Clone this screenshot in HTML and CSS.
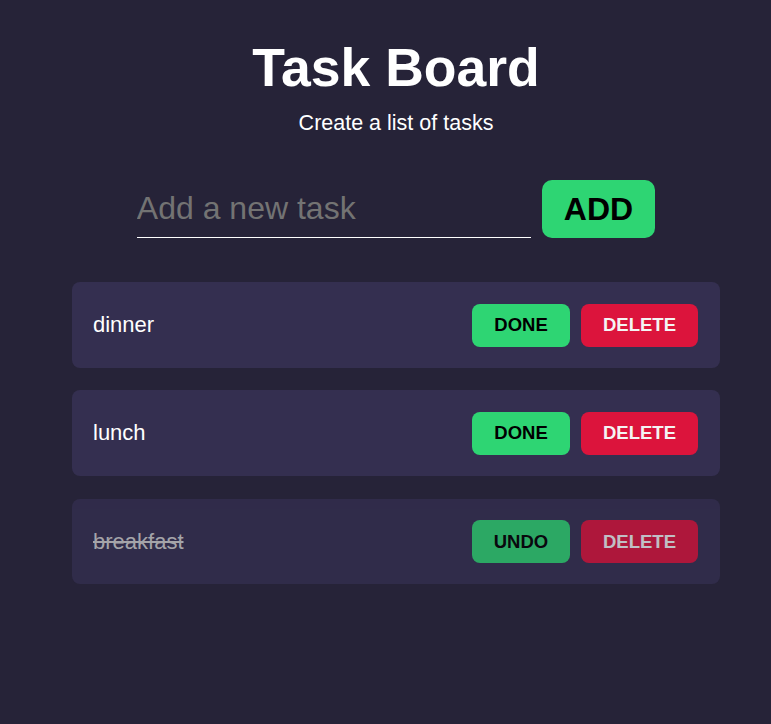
FILE: index.html
```html
<!DOCTYPE html>
<html lang="en">
<head>
<meta charset="utf-8">
<title>Task Board</title>
<link rel="stylesheet" href="styles.css">
</head>
<body>
<main class="app">
  <header class="header">
    <h1 class="title">Task Board</h1>
    <p class="subtitle">Create a list of tasks</p>
  </header>
  <form class="add-form" onsubmit="return false">
    <input class="add-input" type="text" placeholder="Add a new task">
    <button class="add-btn" type="submit">ADD</button>
  </form>
  <ul class="tasks">
    <li class="task">
      <span class="task-name">dinner</span>
      <div class="task-actions">
        <button class="btn btn-done">DONE</button>
        <button class="btn btn-delete">DELETE</button>
      </div>
    </li>
    <li class="task">
      <span class="task-name">lunch</span>
      <div class="task-actions">
        <button class="btn btn-done">DONE</button>
        <button class="btn btn-delete">DELETE</button>
      </div>
    </li>
    <li class="task task-completed">
      <span class="task-name">breakfast</span>
      <div class="task-actions">
        <button class="btn btn-done">UNDO</button>
        <button class="btn btn-delete">DELETE</button>
      </div>
    </li>
  </ul>
</main>
</body>
</html>
```
FILE: styles.css
```css
* { box-sizing: border-box; }
html, body {
  margin: 0;
  padding: 0;
  background: #262338;
  min-height: 100%;
}
body {
  font-family: "Liberation Sans", Arial, sans-serif;
  color: #ffffff;
  padding-left: 21px;
}
.app {
  width: 648px;
  margin: 0 auto;
  padding-top: 36px;
}
.header {
  text-align: center;
}
.title {
  margin: 0;
  font-size: 53.5px;
  line-height: 64px;
  font-weight: 700;
}
.subtitle {
  margin: 10px 0 0;
  font-size: 21.5px;
  line-height: 26px;
}
.add-form {
  display: flex;
  justify-content: center;
  align-items: flex-end;
  gap: 11px;
  margin-top: 44px;
}
.add-input {
  width: 394px;
  height: 58px;
  padding: 0;
  border: none;
  border-bottom: 1px solid #ffffff;
  background: transparent;
  color: #ffffff;
  font-family: inherit;
  font-size: 32px;
  outline: none;
}
.add-input::placeholder {
  color: #737373;
}
.add-btn {
  height: 58px;
  padding: 0 22px;
  border: none;
  border-radius: 10px;
  background: #2ed573;
  color: #000;
  font-family: inherit;
  font-weight: 700;
  font-size: 32px;
}
.tasks {
  list-style: none;
  margin: 44px 0 0;
  padding: 0;
  display: flex;
  flex-direction: column;
  gap: 22px;
}
.task {
  display: flex;
  align-items: center;
  justify-content: space-between;
  height: 86px;
  padding: 0 22px 0 21px;
  background: #342f50;
  border-radius: 8px;
}
.task-completed {
  margin-top: 1px;
  height: 85px;
}
.task-name {
  font-size: 22px;
}
.task-actions {
  display: flex;
  gap: 11px;
}
.btn {
  height: 43px;
  padding: 0 21px;
  border: none;
  border-radius: 8px;
  font-family: inherit;
  font-weight: 700;
  font-size: 18.5px;
}
.btn-done {
  background: #2ed573;
  color: #000;
  min-width: 98px;
}
.btn-delete {
  background: #dc143c;
  color: #f4f4f4;
  min-width: 117px;
}
.task-completed {
  opacity: 0.75;
}
.task-completed .task-name {
  text-decoration: line-through;
  color: #cfcfcf;
}
```
